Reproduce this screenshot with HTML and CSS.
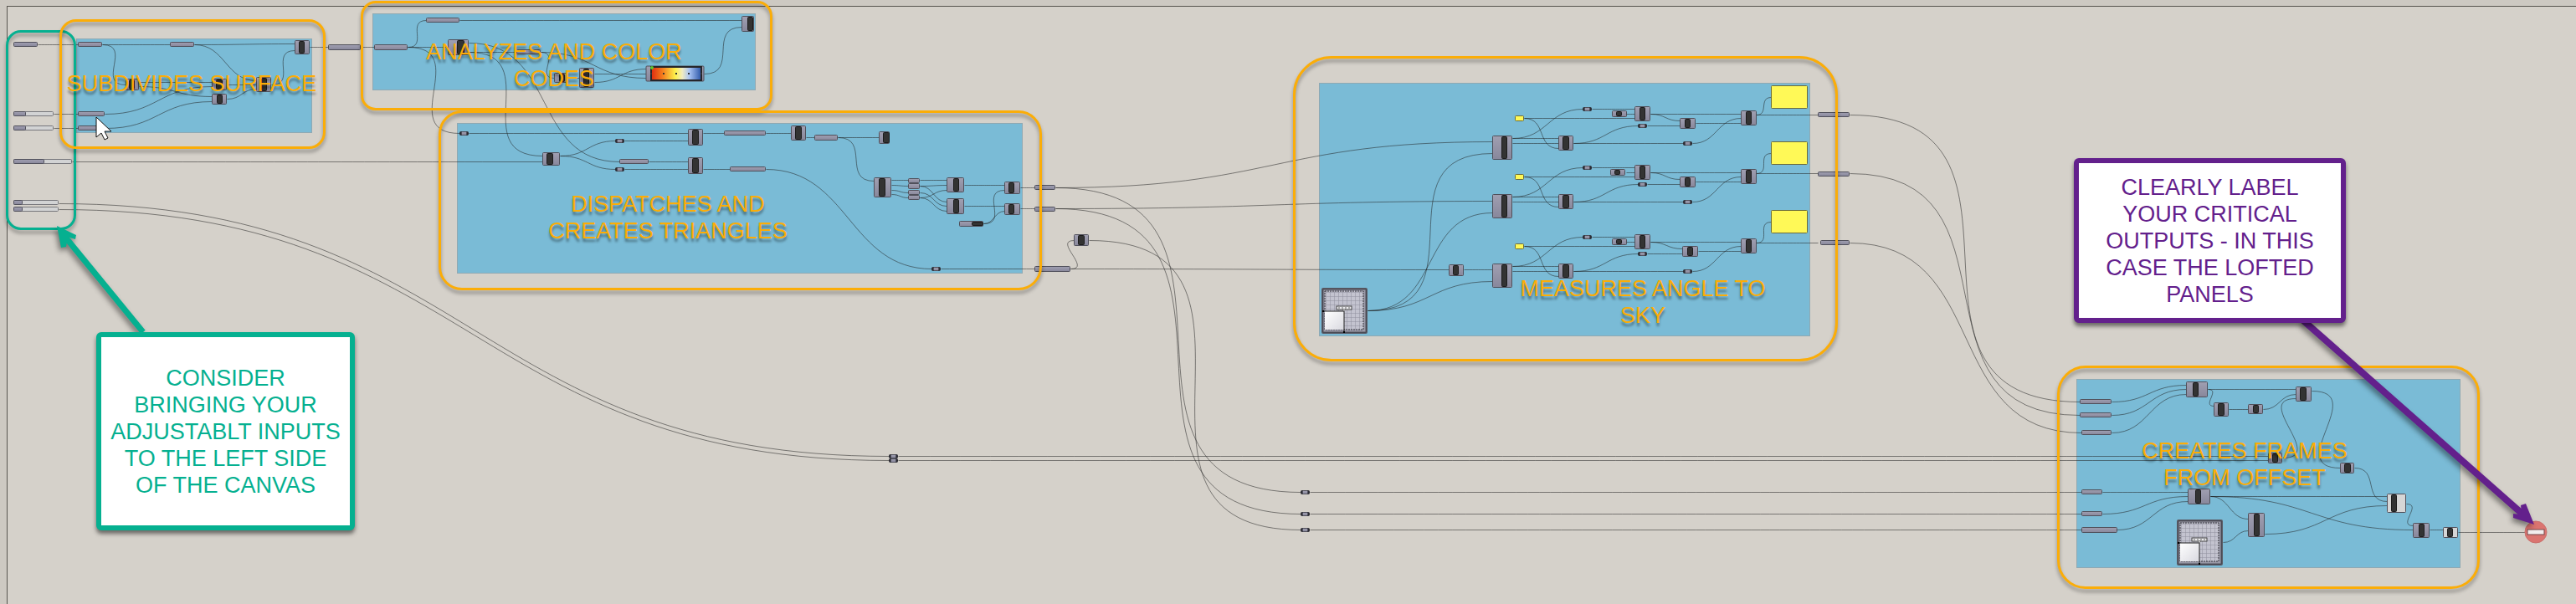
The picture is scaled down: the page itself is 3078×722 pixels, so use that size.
FILE: index.html
```html
<!DOCTYPE html>
<html lang="en">
<head>
<meta charset="utf-8">
<title>Definition canvas</title>
<link rel="stylesheet" href="styles.css">
</head>
<body>
<main class="canvas">
  <div class="sheet"></div>
  <svg class="graph" xmlns="http://www.w3.org/2000/svg" aria-hidden="true">
    <defs>
      <linearGradient id="spectrum">
        <stop offset="0" stop-color="#e02a10"/>
        <stop offset="0.22" stop-color="#f47a1c"/>
        <stop offset="0.48" stop-color="#fdf04a"/>
        <stop offset="0.62" stop-color="#f2ecc0"/>
        <stop offset="0.76" stop-color="#a9c4f4"/>
        <stop offset="1" stop-color="#2a55a8"/>
      </linearGradient>
      <linearGradient id="body" x2="0" y2="1">
        <stop offset="0" stop-color="#a09fb1"/>
        <stop offset="1" stop-color="#88879b"/>
      </linearGradient>
      <linearGradient id="knob" x2="1" y2="1">
        <stop offset="0" stop-color="#ffffff"/>
        <stop offset="1" stop-color="#d9d9e0"/>
      </linearGradient>
      <pattern id="grid" width="5" height="5" patternUnits="userSpaceOnUse">
        <rect width="5" height="5" fill="#c3c3cf"/>
        <path d="M0 0H5M0 0V5" stroke="#8f8f9e" stroke-width="1"/>
      </pattern>
      <g id="pad">
        <rect x="1" y="1" width="53" height="53" rx="1" fill="#9b9ba9" stroke="#5b5b66" stroke-width="2"/>
        <rect x="2" y="2" width="51" height="51" fill="none" stroke="#26262c" stroke-width="1" opacity=".6"/>
        <rect x="4" y="4" width="46" height="46" fill="url(#grid)" stroke="#33333a" stroke-dasharray="2 1"/>
        <rect x="4" y="28" width="23" height="22" fill="url(#knob)"/>
        <path d="M1 28H27V53" fill="none" stroke="#222" stroke-width="1"/>
        <rect x="1" y="27" width="2" height="2"/><rect x="26" y="52" width="2" height="2"/>
        <rect x="18" y="22" width="18" height="4" fill="#ededf0" stroke="#444"/>
        <path d="M20 24H34" stroke="#666" stroke-dasharray="2 2"/>
        <path d="M25 26L27 28L29 26Z" fill="#eee" stroke="#444" stroke-width=".5"/>
      </g>
    </defs>
    <g id="groups" class="groups"></g>
    <g id="wires" class="wires" transform="translate(.5 .5)"></g>
    <g id="nodes" class="nodes"></g>
    <use href="#pad" x="1579" y="344"/>
    <use href="#pad" x="2601" y="621"/>
    <g>
      <rect class="part" x="772" y="79" width="69" height="18" rx="1"/>
      <rect x="778" y="80" width="60" height="16" fill="url(#spectrum)" stroke="#26262a" stroke-width="2"/>
      <circle cx="779" cy="81" r="2" fill="#5bc52c"/>
      <path d="M777 88h2M792 88h2M807 88h2M822 88h2M837 88h2" stroke="#333" stroke-width="2"/>
    </g>
    <circle cx="3030" cy="636" r="13" fill="#db7470" stroke="#c9706c"/>
    <rect x="3020" y="633" width="20" height="6" fill="#f3eeee" stroke="#77494a"/>
    <path d="M115 140V164L121 159L125 167L129 165L125 157H133Z" fill="#fff" stroke="#111"/>
  </svg>

  <div class="frame inputs"></div>
  <div class="frame subdivide"></div>
  <div class="frame analyze"></div>
  <div class="frame dispatch"></div>
  <div class="frame measure"></div>
  <div class="frame create"></div>

  <h2 class="label label-subdivide">SUBDIVIDES SURFACE</h2>
  <h2 class="label label-analyze">ANALYZES AND COLOR<br>CODES</h2>
  <h2 class="label label-dispatch">DISPATCHES AND<br>CREATES TRIANGLES</h2>
  <h2 class="label label-measure">MEASURES ANGLE TO<br>SKY</h2>
  <h2 class="label label-create">CREATES FRAMES<br>FROM OFFSET</h2>

  <svg class="graph arrows" xmlns="http://www.w3.org/2000/svg" aria-hidden="true">
    <g fill="#05b090" stroke="none">
      <path d="M171 397L81 287" stroke="#05b090" stroke-width="7"/>
      <path d="M68 270L91 281L90 286L83 284L86 290L80 289L79 295L73 296Z"/>
    </g>
    <g fill="#63208c">
      <path d="M2752 383L3017 617" stroke="#63208c" stroke-width="8"/>
      <path d="M3028 627L3018 602L3012 604L3013 613L3011 615L3003 614L3003 619Z"/>
    </g>
  </svg>
  <p class="callout callout-inputs">CONSIDER<br>BRINGING YOUR<br>ADJUSTABLT INPUTS<br>TO THE LEFT SIDE<br>OF THE CANVAS</p>
  <p class="callout callout-outputs">CLEARLY LABEL<br>YOUR CRITICAL<br>OUTPUTS - IN THIS<br>CASE THE LOFTED<br>PANELS</p>
</main>
<script src="graph.js"></script>
</body>
</html>
```
FILE: styles.css
```css
body {
  margin: 0;
  background: #cdc9c2;
  font-family: "Liberation Sans", Arial, sans-serif;
}

.canvas {
  position: relative;
  min-height: 100vh;
  overflow: hidden;
}

.sheet {
  position: absolute;
  inset: 7px 0 0 8px;
  border-top: 1px solid #57544f;
  border-left: 1px solid #57544f;
  background: #d5d1ca;
}

.graph {
  position: absolute;
  inset: 0;
  width: 100%;
  height: 100%;
  overflow: visible;
}

.groups rect {
  fill: #7abbd6;
  stroke: #8fa9b3;
}

.wires path {
  fill: none;
  stroke: #1e1e1e;
  stroke-opacity: 0.52;
}

.part {
  fill: url(#body);
  stroke: #50505b;
}

.part.light {
  fill: #d6d6d6;
}

.core {
  fill: #333;
  stroke: #1c1c1c;
}

.track {
  fill: #d2d3d4;
  stroke: #77777c;
}

.relay-end {
  fill: #2b2b33;
}

.panel {
  fill: #fff957;
  stroke: #6b6b3c;
}

.arrows {
  filter: drop-shadow(-2px 4px 3px rgba(0, 0, 0, 0.45));
}

.frame {
  position: absolute;
  box-sizing: border-box;
  border: 3px solid #fbad08;
  filter: drop-shadow(0 4px 2px rgba(0, 0, 0, 0.35));
}

.inputs {
  left: 7px;
  top: 36px;
  width: 84px;
  height: 239px;
  border-color: #05b090;
  border-radius: 18px;
}

.subdivide {
  left: 71px;
  top: 23px;
  width: 318px;
  height: 155px;
  border-radius: 20px;
}

.analyze {
  left: 431px;
  top: 1px;
  width: 492px;
  height: 131px;
  border-radius: 18px;
}

.dispatch {
  left: 524px;
  top: 132px;
  width: 721px;
  height: 215px;
  border-radius: 28px;
}

.measure {
  left: 1545px;
  top: 67px;
  width: 651px;
  height: 365px;
  border-radius: 46px;
}

.create {
  left: 2458px;
  top: 437px;
  width: 505px;
  height: 267px;
  border-radius: 34px;
}

.label {
  position: absolute;
  width: 340px;
  margin: 0;
  color: #fbad08;
  font-size: 27px;
  font-weight: 400;
  line-height: 32px;
  text-align: center;
  text-shadow: 0 4px 3px rgba(0, 0, 0, 0.4);
}

.label-subdivide {
  left: 59px;
  top: 84px;
}

.label-analyze {
  left: 492px;
  top: 46px;
}

.label-dispatch {
  left: 628px;
  top: 228px;
}

.label-measure {
  left: 1793px;
  top: 329px;
}

.label-create {
  left: 2512px;
  top: 523px;
}

.callout {
  position: absolute;
  box-sizing: border-box;
  display: grid;
  place-content: center;
  margin: 0;
  border: 6px solid;
  border-radius: 6px;
  background: #fff;
  font-size: 27px;
  line-height: 32px;
  text-align: center;
  box-shadow: 0 4px 5px rgba(0, 0, 0, 0.5);
}

.callout-inputs {
  left: 115px;
  top: 397px;
  width: 309px;
  height: 237px;
  color: #05b090;
}

.callout-outputs {
  left: 2478px;
  top: 189px;
  width: 325px;
  height: 197px;
  color: #63208c;
}
```
FILE: graph.js
```js
const NS = "http://www.w3.org/2000/svg";
const layer = (id) => document.getElementById(id);

function add(parent, tag, attrs) {
  const el = document.createElementNS(NS, tag);
  for (const key in attrs) el.setAttribute(key, attrs[key]);
  parent.appendChild(el);
}

function box(parent, x, y, w, h, cls) {
  add(parent, "rect", { x: x + 0.5, y: y + 0.5, width: w - 1, height: h - 1, rx: 1, class: cls });
}

// [x, y, width, height]
const groups = [
  [91, 46, 282, 113], [445, 16, 458, 92], [546, 147, 676, 180],
  [1576, 99, 587, 303], [2481, 453, 459, 226]
];

// [x, y, width, height]
const bars = [
  [16, 50, 29, 6], [93, 50, 29, 6], [203, 50, 29, 6], [93, 133, 32, 6], [93, 150, 32, 6],
  [392, 53, 39, 7], [447, 53, 40, 7], [509, 21, 40, 6], [617, 59, 29, 6],
  [740, 190, 35, 6], [865, 156, 50, 6], [872, 199, 43, 6], [973, 161, 28, 7],
  [1085, 213, 14, 6], [1085, 219, 14, 7], [1085, 227, 14, 6], [1085, 233, 14, 6],
  [1236, 221, 25, 6], [1236, 247, 25, 6], [1236, 318, 43, 7],
  [2172, 134, 38, 6], [2172, 205, 38, 6], [2175, 287, 35, 6],
  [2485, 477, 38, 6], [2485, 493, 38, 6], [2487, 514, 36, 6],
  [2487, 585, 25, 6], [2487, 611, 25, 6], [2487, 630, 43, 7]
];

// [x, y, width, height, core offset, core width, light]
const components = [
  [352, 48, 18, 17, 5, 7], [150, 94, 16, 14, 4, 7], [253, 94, 18, 14, 5, 8],
  [306, 92, 18, 18, 6, 7], [253, 112, 18, 13, 6, 7],
  [535, 47, 25, 19, 11, 9], [662, 87, 16, 12, 6, 7], [692, 81, 18, 24, 5, 7], [886, 19, 15, 19, 7, 7],
  [648, 182, 21, 16, 5, 8], [822, 154, 18, 20, 5, 8], [822, 188, 18, 20, 5, 8],
  [945, 150, 18, 18, 5, 8], [1050, 157, 13, 15, 5, 8], [1044, 212, 21, 24, 6, 8],
  [1131, 212, 21, 18, 8, 7], [1131, 237, 21, 19, 8, 7],
  [1200, 217, 19, 15, 5, 7], [1200, 243, 19, 14, 5, 7], [1146, 264, 29, 7, 15, 14],
  [1283, 280, 18, 14, 5, 8],
  [1731, 316, 18, 14, 5, 7],
  [2612, 456, 26, 19, 8, 7], [2645, 481, 18, 17, 5, 8], [2686, 483, 18, 12, 6, 7],
  [2743, 462, 19, 18, 5, 8], [2710, 541, 17, 13, 5, 7], [2796, 553, 17, 13, 5, 8],
  [2852, 590, 23, 23, 5, 7, 1], [2883, 625, 20, 18, 7, 7], [2919, 630, 18, 13, 5, 7, 1],
  [2614, 584, 27, 19, 9, 7], [2686, 613, 20, 29, 7, 7]
];

// [x, y, width, filled width]
const sliders = [
  [16, 133, 48, 15], [16, 150, 48, 15], [16, 190, 70, 37], [16, 239, 54, 11], [16, 247, 54, 11]
];

// [x, centre y]
const relays = [
  [549, 159], [735, 168], [735, 202], [1113, 321], [1062, 545], [1062, 550],
  [1554, 588], [1554, 614], [1554, 633]
];

const panels = [];

// [x1, y1, x2, y2]
const wires = [
  [45, 53, 93, 53], [122, 53, 203, 53], [122, 53, 150, 101], [232, 53, 352, 52], [232, 53, 306, 96],
  [166, 98, 253, 98], [166, 103, 253, 115], [125, 136, 253, 103], [125, 153, 253, 121],
  [271, 101, 306, 101], [271, 118, 306, 106], [324, 101, 352, 60], [370, 56, 392, 56], [431, 56, 447, 56],
  [64, 136, 93, 136], [64, 153, 93, 153], [86, 193, 648, 193], [70, 243, 1062, 545], [70, 250, 1062, 550],
  [487, 56, 509, 24], [549, 24, 886, 24], [487, 56, 535, 56], [487, 56, 549, 159],
  [560, 51, 740, 193], [560, 62, 617, 62], [560, 62, 648, 186], [646, 62, 662, 93], [646, 62, 772, 93],
  [678, 93, 692, 93], [710, 88, 772, 88], [710, 98, 772, 82], [841, 88, 886, 32],
  [560, 159, 822, 159], [669, 186, 735, 168], [669, 186, 735, 202], [746, 168, 822, 168],
  [775, 193, 822, 193], [746, 202, 822, 202], [840, 159, 865, 159], [840, 202, 872, 202],
  [915, 159, 945, 159], [963, 164, 973, 164], [1001, 164, 1050, 164], [1001, 164, 1044, 216],
  [1065, 215, 1085, 215], [1065, 221, 1085, 222], [1065, 227, 1085, 230], [1065, 232, 1085, 236],
  [1099, 215, 1131, 215], [1099, 222, 1131, 221], [1099, 236, 1131, 227],
  [1099, 222, 1131, 241], [1099, 230, 1131, 246], [1099, 236, 1131, 252],
  [1152, 221, 1200, 221], [1152, 246, 1200, 246], [1175, 267, 1200, 227], [1175, 267, 1200, 252],
  [1219, 224, 1236, 224], [1219, 249, 1236, 249], [915, 202, 1113, 321], [1124, 321, 1236, 321],
  [1279, 321, 1283, 287], [1279, 321, 1731, 322], [1749, 322, 1783, 322],
  [1261, 224, 1783, 169], [1261, 249, 1783, 240],
  [1261, 224, 1554, 588], [1261, 249, 1554, 614], [1301, 287, 1554, 633],
  [1565, 588, 2487, 588], [1565, 614, 2487, 614], [1565, 633, 2487, 633],
  [1073, 545, 2710, 545], [1073, 550, 2710, 550],
  [1634, 371, 1783, 183], [1634, 371, 1783, 254], [1634, 371, 1783, 336],
  [2210, 137, 2485, 480], [2210, 207, 2485, 496], [2210, 290, 2487, 517],
  [2523, 480, 2612, 460], [2523, 496, 2612, 465], [2523, 517, 2612, 471],
  [2638, 465, 2743, 465], [2638, 465, 2645, 485], [2663, 489, 2686, 489], [2704, 489, 2743, 471],
  [2727, 547, 2743, 476], [2762, 467, 2796, 559], [2813, 559, 2852, 599],
  [2512, 588, 2614, 588], [2512, 614, 2614, 593], [2529, 633, 2614, 599],
  [2641, 593, 2852, 593], [2641, 593, 2883, 633], [2641, 593, 2686, 620],
  [2656, 648, 2686, 634], [2706, 638, 2852, 604], [2875, 602, 2883, 628],
  [2903, 633, 2919, 633], [2937, 636, 3020, 636]
];

// The sky-angle chain is repeated once per triangle corner.
const chains = [
  { dy: 0, small: 1926, mid: 2007, panelY: 102 },
  { dy: 70, small: 1924, mid: 2007, panelY: 169 },
  { dy: 153, small: 1926, mid: 2010, panelY: 251 }
];
for (const { dy, small, mid, panelY } of chains) {
  const at = (x1, y1, x2, y2) => wires.push([x1, y1 + dy, x2, y2 + dy]);
  components.push(
    [1783, 162 + dy, 24, 29, 11, 7], [1862, 162 + dy, 18, 18, 5, 8],
    [small, 132 + dy, 18, 8, 5, 7], [1953, 127 + dy, 19, 18, 6, 7],
    [mid, 141 + dy, 19, 13, 6, 7], [2080, 132 + dy, 19, 18, 6, 7]
  );
  relays.push([1891, 130 + dy], [1957, 150 + dy], [2011, 171 + dy]);
  panels.push([1810, 138 + dy, 11, 7], [2116, panelY, 44, 28]);
  at(1807, 165, 1862, 165);
  at(1807, 171, 1862, 171);
  at(1807, 165, 1891, 130);
  at(1821, 141, 1953, 141);
  at(1821, 141, 1862, 177);
  at(1902, 130, 1953, 130);
  at(1943, 136, 1953, 136);
  at(1972, 136, 2080, 136);
  at(1972, 136, mid, 144);
  at(1880, 171, 1957, 150);
  at(1968, 150, mid, 150);
  at(1880, 171, 2011, 171);
  at(mid + 19, 147, 2080, 147);
  at(2022, 171, 2080, 141);
  at(2098, 137, 2172, 137);
  wires.push([2098, 137 + dy, 2116, panelY + 14]);
}

for (const [x, y, w, h] of groups) {
  add(layer("groups"), "rect", { x: x + 0.5, y: y + 0.5, width: w - 1, height: h - 1 });
}

for (const [x1, y1, x2, y2] of wires) {
  const c = Math.max((x2 - x1) / 2, Math.abs(y2 - y1) * 0.75);
  add(layer("wires"), "path", { d: `M${x1} ${y1}C${x1 + c} ${y1} ${x2 - c} ${y2} ${x2} ${y2}` });
}

const nodes = layer("nodes");
for (const [x, y, w, h] of bars) box(nodes, x, y, w, h, "part");
for (const [x, y, w, h, cx, cw, light] of components) {
  box(nodes, x, y, w, h, light ? "part light" : "part");
  box(nodes, x + cx, y + 1, cw, h - 2, "core");
}
for (const [x, y, w, fill] of sliders) {
  box(nodes, x, y, w, 6, "track");
  box(nodes, x, y, fill, 6, "part");
}
for (const [x, cy] of relays) {
  add(nodes, "rect", { x, y: cy - 2, width: 11, height: 5, rx: 2, class: "relay-end" });
  box(nodes, x + 2, cy - 2, 7, 5, "part");
}
for (const [x, y, w, h] of panels) box(nodes, x, y, w, h, "panel");
```
